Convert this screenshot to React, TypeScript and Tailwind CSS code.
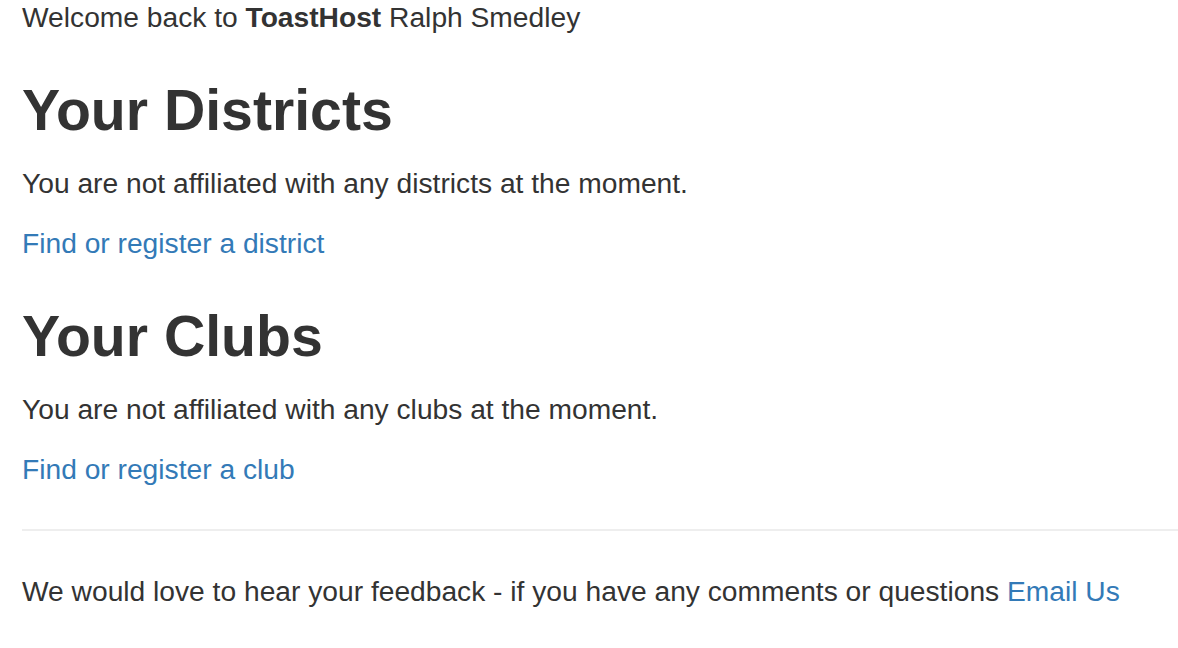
export default function App() {
  return (
    <div
      className="min-h-screen bg-white pl-[22px] text-[28.2px] leading-[40px] text-[#333333]"
      style={{ fontFamily: '"Liberation Sans", Arial, Helvetica, sans-serif' }}
    >
      <p className="-mt-[3px]">
        Welcome back to <strong className="font-bold">ToastHost</strong> Ralph Smedley
      </p>

      {/* Districts */}
      <h1 className="mt-[40px] mb-[20px] text-[57.2px] font-bold leading-[66px]">Your Districts</h1>
      <p className="mb-[20px]">You are not affiliated with any districts at the moment.</p>
      <p className="mb-[20px]">
        <a href="#" className="text-[#337ab7] hover:underline">
          Find or register a district
        </a>
      </p>

      {/* Clubs */}
      <h1 className="mt-[40px] mb-[20px] text-[57.2px] font-bold leading-[66px]">Your Clubs</h1>
      <p className="mb-[20px]">You are not affiliated with any clubs at the moment.</p>
      <p>
        <a href="#" className="text-[#337ab7] hover:underline">
          Find or register a club
        </a>
      </p>

      <hr className="my-[40px] border-0 border-t-2 border-[#eeeeee]" />

      <p>
        We would love to hear your feedback - if you have any comments or questions{" "}
        <a href="#" className="text-[#337ab7] hover:underline">
          Email Us
        </a>
      </p>
    </div>
  );
}
